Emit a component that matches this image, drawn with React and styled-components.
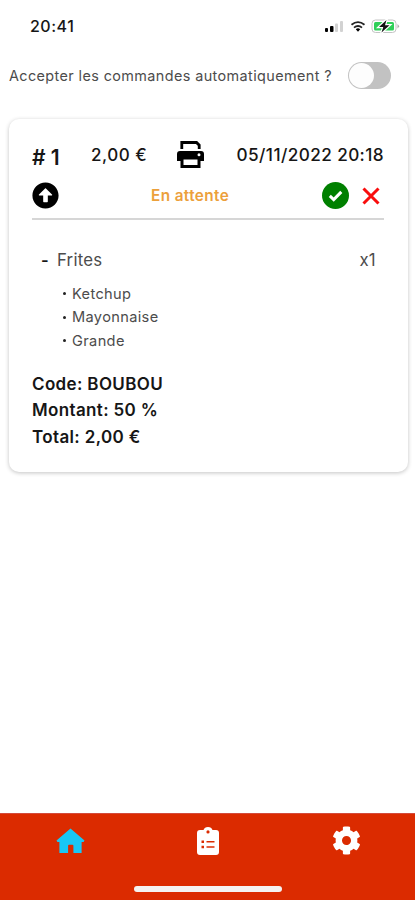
import React from 'react';
import styled, { createGlobalStyle } from 'styled-components';
import { FaCog, FaArrowAltCircleUp } from 'react-icons/fa';

const GlobalStyle = createGlobalStyle`
  * { box-sizing: border-box; }
  body { margin: 0; background: #fff; font-family: Inter, "Liberation Sans", sans-serif; color: #161616; }
`;
const Screen = styled.div`
  height: 900px;
  width: 415px;
  display: flex;
  flex-direction: column;
  overflow: hidden;
`;
const StatusBar = styled.header`
  height: 52px;
  padding: 0 15px 0 30px;
  display: flex;
  align-items: center;
  justify-content: space-between;
`;
const StatusIcons = styled.svg`
  width: 76px;
  height: 20px;
  display: block;
`;
const Text = styled.span`
  font-size: ${(p) => p.$size}px;
  font-weight: ${(p) => p.$weight || 400};
  letter-spacing: ${(p) => p.$spacing || 0}px;
  color: ${(p) => p.$color || 'inherit'};
  line-height: 20px;
  white-space: nowrap;
`;
const AutoAccept = styled.div`
  height: 47px;
  padding: 0 24px 0 9px;
  display: flex;
  align-items: center;
  justify-content: space-between;
`;
const Toggle = styled.button`
  width: 43px;
  height: 27px;
  border: 0;
  border-radius: 14px;
  padding: 1px;
  background: #c2c2c2;
  display: flex;
`;
const Knob = styled.span`
  width: 25px;
  height: 25px;
  border-radius: 50%;
  background: #fdfdfd;
`;
const Card = styled.article`
  margin: 20px 7px 0 9px;
  height: 353px;
  padding: 20px 24px 0 23px;
  border-radius: 10px;
  background: #fff;
  box-shadow: 0 1px 4px rgba(0, 0, 0, 0.24);
`;
const Summary = styled.div`
  height: 34px;
  display: grid;
  grid-template-columns: 59px 86px 1fr auto;
  align-items: start;
`;
const Cell = styled.div`
  display: flex;
  padding-top: ${(p) => p.$top || 0}px;
`;
const StateRow = styled.div`
  height: 47px;
  display: grid;
  grid-template-columns: 119px 1fr auto;
  align-items: center;
  border-bottom: 2px solid #d6d6d6;
`;
const Actions = styled.div`
  display: flex;
  align-items: center;
  gap: 13px;
  padding-right: 4px;
`;
const Icon = styled.svg`
  display: block;
  width: ${(p) => p.$w}px;
  height: ${(p) => p.$h}px;
`;
const Product = styled.div`
  margin-top: 30px;
  padding: 0 8px 0 9px;
  display: grid;
  grid-template-columns: 16px 1fr auto;
`;
const Options = styled.ul`
  list-style: none;
  margin: 12px 0 0;
  padding: 0 0 0 31px;
`;
const Option = styled.li`
  height: 23.5px;
  display: flex;
  align-items: center;
  gap: 6px;
`;
const Bullet = styled.span`
  width: 3px;
  height: 3px;
  border-radius: 50%;
  background: #222;
`;
const Totals = styled.div`
  margin-top: 21px;
  display: flex;
  flex-direction: column;
  gap: 6.7px;
`;
const TabBar = styled.nav`
  margin-top: auto;
  height: 87px;
  background: #db2b00;
  border-top: 1px solid #d34b3b;
  display: flex;
  flex-direction: column;
  justify-content: space-between;
  align-items: center;
  padding-bottom: 8px;
`;
const Tabs = styled.div`
  width: 100%;
  height: 54px;
  padding-left: 1px;
  display: grid;
  grid-template-columns: repeat(3, 1fr);
`;
const Tab = styled.button`
  border: 0;
  padding: 0 0 1px;
  background: none;
  color: ${(p) => (p.$active ? '#18c7f5' : '#fff')};
  display: flex;
  align-items: center;
  justify-content: center;
`;
const HomeIndicator = styled.div`
  width: 148px;
  height: 6px;
  border-radius: 3px;
  background: #f5f2f1;
`;

export default function App() {
  return (
    <Screen>
      <GlobalStyle />
      <StatusBar>
        <Text $size={16} $weight={500} $spacing={0.5}>20:41</Text>
        <StatusIcons viewBox="0 0 76 20">
          <rect x="1" y="12" width="3" height="4" rx="1" />
          <rect x="6" y="10" width="3.500" height="6" rx="1" />
          <rect x="11" y="7.500" width="3" height="8.500" rx="1" fill="#d2d2d2" />
          <rect x="16" y="5" width="3" height="11" rx="1" fill="#d2d2d2" />
          <g fill="none" stroke="#222" strokeWidth="1.800">
            <path d="M27.500 8.800Q34 3.500 40.500 8.800" />
            <path d="M30 11.600Q34 8.300 38 11.600" />
          </g>
          <path d="M31.800 13.200Q34 11.500 36.200 13.200L34 15.800Z" />
          <rect x="48" y="4" width="24" height="12.500" rx="3.500" fill="#fff" stroke="#c4c4c4" />
          <rect x="50" y="6" width="20" height="8.500" rx="1.500" fill="#2fcf58" />
          <path d="M73.500 8Q76.500 10.300 73.500 12.500Z" fill="#aaa" />
          <path d="M62.500 4L55 11H59.300L57.500 16.500L65.500 9.200H61Z" fill="#111" stroke="#fff" strokeWidth="2.400" paintOrder="stroke" />
        </StatusIcons>
      </StatusBar>
      <AutoAccept>
        <Text $size={14.4} $spacing={0.4} $color="#4c4c4c">Accepter les commandes automatiquement ?</Text>
        <Toggle aria-label="Accepter automatiquement"><Knob /></Toggle>
      </AutoAccept>
      <Card>
        <Summary>
          <Cell $top={9}><Text $size={21} $weight={600} $spacing={0}># 1</Text></Cell>
          <Cell $top={6}><Text $size={17} $weight={500} $spacing={0.5}>2,00 €</Text></Cell>
          <Cell $top={2}>
            <Icon $w={27} $h={27} viewBox="0 0 27 27">
              <path d="M4.800 8V1.500H19.500L22.200 4.200V8" fill="none" stroke="#000" strokeWidth="2.800" />
              <path fillRule="evenodd" d="M3 10H24Q27 10 27 13V20H23.500V27H3.500V20H0V13Q0 10 3 10ZM6.500 18.500V24H20.500V18.500ZM22 12.300A1.500 1.500 0 1 0 22 15.300A1.500 1.500 0 1 0 22 12.300" />
            </Icon>
          </Cell>
          <Cell $top={6}><Text $size={17.2} $weight={550} $spacing={0.4}>05/11/2022 20:18</Text></Cell>
        </Summary>
        <StateRow>
          <FaArrowAltCircleUp size={27} color="#000" />
          <Text $size={15.3} $weight={600} $spacing={0.4} $color="#eca03b">En attente</Text>
          <Actions>
            <Icon $w={27} $h={27} viewBox="0 0 27 27">
              <circle cx="13.500" cy="13.500" r="13.500" fill="#008000" />
              <path d="M7.800 13.900L11.700 17.600L19.300 9.900" fill="none" stroke="#fff" strokeWidth="3" />
            </Icon>
            <Icon $w={18} $h={18} viewBox="0 0 18 18">
              <path d="M1.500 1.500L16.500 16.500M16.500 1.500L1.500 16.500" stroke="#f90d0d" strokeWidth="3" />
            </Icon>
          </Actions>
        </StateRow>
        <Product>
          <Text $size={16.5} $weight={600}>-</Text>
          <Text $size={16.8} $spacing={0.2} $color="#4c4c4c">Frites</Text>
          <Text $size={16.8} $spacing={0.3} $color="#4c4c4c">x1</Text>
        </Product>
        <Options>
          {['Ketchup', 'Mayonnaise', 'Grande'].map((name) => (
            <Option key={name}><Bullet /><Text $size={14.6} $spacing={0.35} $color="#4c4c4c">{name}</Text></Option>
          ))}
        </Options>
        <Totals>
          <Text $size={17} $weight={600} $spacing={0.35}>Code: BOUBOU</Text>
          <Text $size={17} $weight={600} $spacing={0.35}>Montant: 50 %</Text>
          <Text $size={17} $weight={600} $spacing={0.35}>Total: 2,00 €</Text>
        </Totals>
      </Card>
      <TabBar>
        <Tabs>
          <Tab $active aria-label="Accueil">
            <Icon $w={29} $h={26} viewBox="0 0 30 26" fill="currentColor">
              <path d="M15 0L29.500 12.500L28.500 14H26.500V25.500H18V18Q18 17 17 17H13.500Q12.500 17 12.500 18V25.500H3.500V14H1.500L.500 12.500Z" />
            </Icon>
          </Tab>
          <Tab aria-label="Commandes">
            <Icon $w={22} $h={28} viewBox="0 0 22 28" fill="currentColor">
              <path fillRule="evenodd" d="M3 3H6.500Q7.500 0 11 0Q14.500 0 15.500 3H19Q22 3 22 6V25Q22 28 19 28H3Q0 28 0 25V6Q0 3 3 3ZM11 3.300A1.600 1.600 0 1 0 11 6.500A1.600 1.600 0 1 0 11 3.300M4.500 13.500H7V16H4.500ZM9.500 14H17.500V15.600H9.500ZM4.500 18.700H7V21.200H4.500ZM9.500 19.200H17.500V20.800H9.500Z" />
            </Icon>
          </Tab>
          <Tab aria-label="Paramètres"><FaCog size={29} /></Tab>
        </Tabs>
        <HomeIndicator />
      </TabBar>
    </Screen>
  );
}
